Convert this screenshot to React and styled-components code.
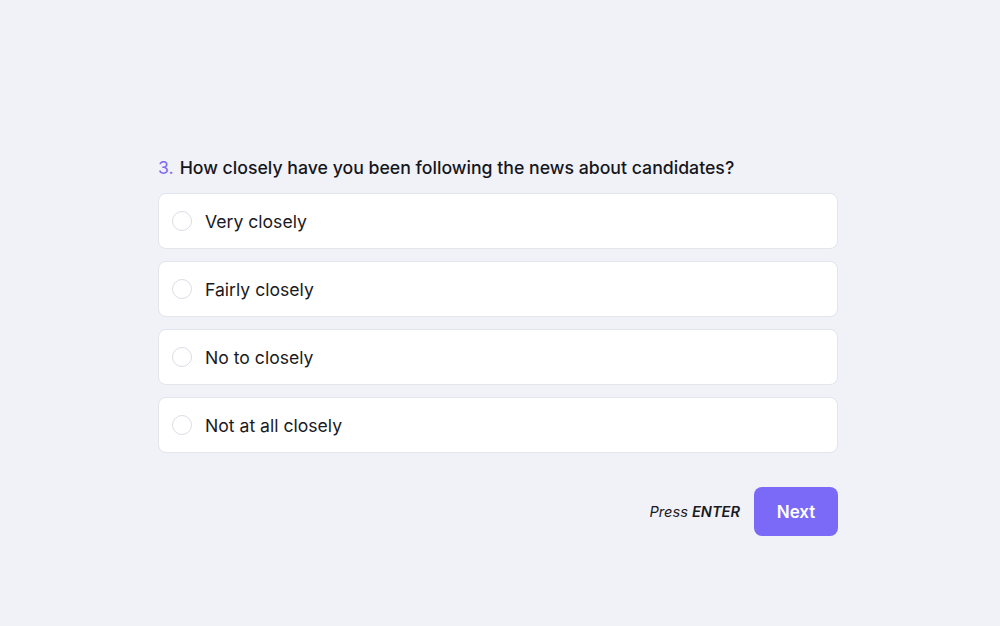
import React from 'react'
import styled, { createGlobalStyle } from 'styled-components'

const Global = createGlobalStyle`
    html, body {
        margin: 0;
        padding: 0;
        background-color: #f1f2f7;
        font-family: Inter, "Noto Sans", sans-serif;
    }
`
const Page = styled.div`
    width: 1000px;
    height: 626px;
    display: flex;
    padding: 156px 0 0 158px;
    box-sizing: border-box;
`
const Form = styled.div`
    width: 680px;
    display: flex;
    flex-direction: column;
`
const Question = styled.h2`
    margin: 0 0 13px 0;
    font-size: 17.7px;
    font-weight: 500;
    color: #16161d;
    line-height: 24px;
`
const Num = styled.span`
    color: #7c6cf0;
    font-weight: 400;
    margin-right: 6px;
`
const Options = styled.div`
    display: flex;
    flex-direction: column;
    gap: 12px;
`
const Option = styled.label`
    height: 56px;
    box-sizing: border-box;
    background: #ffffff;
    border: 1px solid #e3e5ec;
    border-radius: 8px;
    display: flex;
    align-items: center;
    padding: 1px 0 0 13px;
    cursor: pointer;
`
const Radio = styled.span`
    width: 20px;
    height: 20px;
    box-sizing: border-box;
    border-radius: 50%;
    border: 1px solid #dcdee5;
    background: #fff;
    margin: -2px 13px 0 0;
`
const Label = styled.span`
    font-size: 17.6px;
    color: #1a1a22;
`
const Footer = styled.div`
    display: flex;
    justify-content: flex-end;
    align-items: center;
    margin-top: 34px;
    gap: 14px;
`
const Hint = styled.span`
    font-size: 14.6px;
    font-style: italic;
    color: #1a1a22;
    b { font-weight: 600; }
`
const Button = styled.button`
    width: 84px;
    height: 49px;
    border: none;
    border-radius: 8px;
    background: #7b6af7;
    color: #fff;
    font-family: Inter, "Noto Sans", sans-serif;
    font-size: 17px;
    font-weight: 600;
    cursor: pointer;
`

const choices = ['Very closely', 'Fairly closely', 'No to closely', 'Not at all closely']

function App() {
    return (
        <Page>
            <Global />
            <Form>
                <Question><Num>3.</Num>How closely have you been following the news about candidates?</Question>
                <Options>
                    {choices.map(c => (
                        <Option key={c}>
                            <Radio />
                            <Label>{c}</Label>
                        </Option>
                    ))}
                </Options>
                <Footer>
                    <Hint>Press <b>ENTER</b></Hint>
                    <Button>Next</Button>
                </Footer>
            </Form>
        </Page>
    )
}
export default App
